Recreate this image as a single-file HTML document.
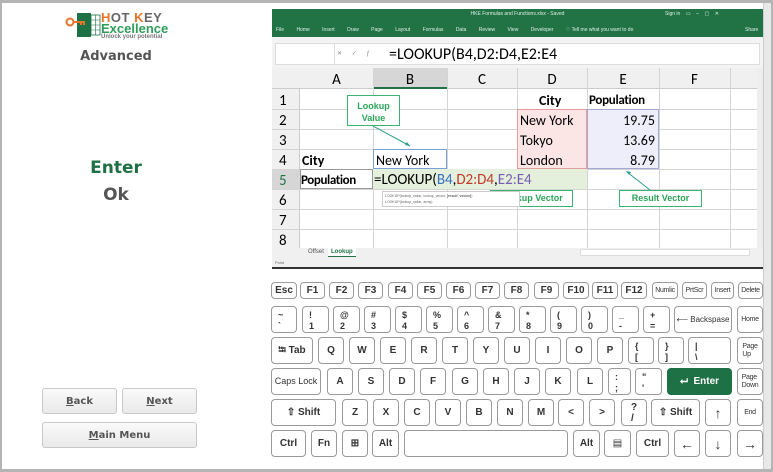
<!DOCTYPE html><html><head><meta charset="utf-8"><style>
*{margin:0;padding:0;box-sizing:border-box}
body{width:773px;height:472px;position:relative;overflow:hidden;background:#fff;font-family:"Liberation Sans",Arial,sans-serif}
.a{position:absolute}
.k{position:absolute;border:1px solid #9a9a9a;border-radius:4px;background:#fff;font:bold 10px "Liberation Sans",Arial,sans-serif;color:#333;display:flex;align-items:center;justify-content:center;line-height:1}
.k.s{font-size:7px;font-weight:normal;letter-spacing:-.3px}
.k.d{display:block;font-size:9px;padding:3px 0 0 6px;line-height:11px;text-align:left}
.k.ar{font-size:14px;font-weight:normal}
.r1{top:282px;height:17px}.r2{top:306px;height:27px}.r3{top:337px;height:27px}.r4{top:368px;height:27px}.r5{top:399px;height:27px}.r6{top:430px;height:27px}
.cell{position:absolute;font-family:Calibri,"Liberation Sans",sans-serif;font-size:14px;color:#000}
.hl{position:absolute;background:#d4d4d4;height:1px}
.vl{position:absolute;background:#d4d4d4;width:1px}
.btn{position:absolute;border:1px solid #c8c8c8;border-radius:3px;background:linear-gradient(#fafafa,#e9e9e9);font:bold 10px "DejaVu Sans",sans-serif;color:#555;display:flex;align-items:center;justify-content:center}
.call{position:absolute;border:1px solid #3cb371;background:#fff;color:#2aa55a;font:bold 9px "Liberation Sans",sans-serif;text-align:center}
</style></head><body>
<div class="a" style="left:0;top:0;width:773px;height:3px;background:#b4b4b4"></div>
<div class="a" style="left:0;bottom:0;width:773px;height:3px;background:#b4b4b4"></div>
<div class="a" style="left:0;top:0;width:2px;height:472px;background:#b4b4b4"></div>
<div class="a" style="left:763px;top:3px;width:10px;height:466px;background:#e8e8e8;border-left:1px solid #ccc;border-right:2px solid #b4b4b4"></div>
<svg class="a" style="left:64px;top:12px" width="38" height="26"><rect x="13" y="1" width="14" height="24" fill="#1e7145"/><rect x="27" y="3" width="9" height="20" fill="#fff" stroke="#1e7145" stroke-width=".8"/><path d="M27 8h9M27 13h9M27 18h9M31.5 3v20" stroke="#1e7145" stroke-width=".6"/><circle cx="6" cy="10" r="3.5" fill="none" stroke="#e8742a" stroke-width="2"/><path d="M9 10h12M17 10v3M20 10v3" stroke="#e8742a" stroke-width="2"/></svg>
<div class="a" style="left:101px;top:10px;font:bold 13px 'Liberation Sans',sans-serif;color:#666;letter-spacing:.5px"><span style="color:#e8742a">H</span>OT <span style="color:#e8742a">K</span>EY</div>
<div class="a" style="left:101px;top:21px;font:bold 13px 'Liberation Sans',sans-serif;color:#2e9c5a">Excellence</div>
<div class="a" style="left:101px;top:34px;font:bold 6px 'Liberation Sans',sans-serif;color:#777">Unlock your potential</div>
<div class="a" style="left:0;width:232px;top:49px;text-align:center;font:bold 13px 'DejaVu Sans',sans-serif;color:#555">Advanced</div>
<div class="a" style="left:0;width:232px;top:158px;text-align:center;font:bold 17px 'DejaVu Sans',sans-serif;color:#1e7145">Enter</div>
<div class="a" style="left:0;width:232px;top:185px;text-align:center;font:bold 17px 'DejaVu Sans',sans-serif;color:#555">Ok</div>
<div class="btn" style="left:42px;top:388px;width:75px;height:26px"><u>B</u>ack</div>
<div class="btn" style="left:122px;top:388px;width:75px;height:26px"><u>N</u>ext</div>
<div class="btn" style="left:42px;top:422px;width:155px;height:26px"><u>M</u>ain Menu</div>
<div class="a" style="left:272px;top:9px;width:491px;height:28px;background:#217346"></div>
<div class="a" style="left:272px;top:11px;width:491px;text-align:center;font:5px sans-serif;color:#e0efe6">HKE Formulas and Functions.xlsx - Saved</div>
<div class="a" style="left:665px;top:11px;font:5px sans-serif;color:#e0efe6">Sign in &nbsp;&nbsp; ▭ &nbsp;&nbsp; – &nbsp;&nbsp; ▢ &nbsp;&nbsp; ✕</div>
<div class="a" style="left:276px;top:27px;font:5px sans-serif;color:#e0efe6;word-spacing:11px;white-space:nowrap">File Home Insert Draw Page&#160;Layout Formulas Data Review View Developer <span style="word-spacing:0">♡ Tell me what you want to do</span></div>
<div class="a" style="left:745px;top:27px;font:5px sans-serif;color:#e0efe6">Share</div>
<div class="a" style="left:272px;top:37px;width:491px;height:31px;background:#f3f3f3"></div>
<div class="a" style="left:275px;top:43px;width:485px;height:22px;background:#fff;border:1px solid #ddd"></div>
<div class="a" style="left:334px;top:43px;width:1px;height:22px;background:#ddd"></div>
<div class="a" style="left:337px;top:50px;font:6px sans-serif;color:#888;word-spacing:8px">✕ ✓ ƒ</div>
<div class="a" style="left:389px;top:45px;font:16px Calibri,'Liberation Sans',sans-serif">=LOOKUP(B4,D2:D4,E2:E4</div>
<div class="a" style="left:272px;top:68px;width:485px;height:180px;background:#fff"></div>
<div class="a" style="left:272px;top:68px;width:485px;height:21px;background:#f0f0f0;border-bottom:1px solid #ccc"></div>
<div class="a" style="left:373px;top:68px;width:74px;height:21px;background:#d6d6d6;border-bottom:2px solid #217346"></div>
<div class="a" style="left:272px;top:89px;width:28px;height:159px;background:#f0f0f0;border-right:1px solid #ccc"></div>
<div class="a" style="left:272px;top:169px;width:28px;height:20px;background:#d6d6d6"></div>
<div class="a" style="left:757px;top:68px;width:6px;height:180px;background:#eee"></div>
<div class="hl" style="left:272px;top:109px;width:485px"></div><div class="hl" style="left:272px;top:129px;width:485px"></div><div class="hl" style="left:272px;top:149px;width:485px"></div><div class="hl" style="left:272px;top:169px;width:485px"></div><div class="hl" style="left:272px;top:189px;width:485px"></div><div class="hl" style="left:272px;top:209px;width:485px"></div><div class="hl" style="left:272px;top:229px;width:485px"></div>
<div class="vl" style="left:373px;top:68px;height:180px"></div><div class="vl" style="left:447px;top:68px;height:180px"></div><div class="vl" style="left:517px;top:68px;height:180px"></div><div class="vl" style="left:587px;top:68px;height:180px"></div><div class="vl" style="left:659px;top:68px;height:180px"></div><div class="vl" style="left:730px;top:68px;height:180px"></div>
<div class="cell" style="left:300px;top:71px;width:73px;text-align:center;font-size:15px">A</div>
<div class="cell" style="left:373px;top:71px;width:74px;text-align:center;font-size:15px">B</div>
<div class="cell" style="left:447px;top:71px;width:70px;text-align:center;font-size:15px">C</div>
<div class="cell" style="left:517px;top:71px;width:70px;text-align:center;font-size:15px">D</div>
<div class="cell" style="left:587px;top:71px;width:72px;text-align:center;font-size:15px">E</div>
<div class="cell" style="left:659px;top:71px;width:71px;text-align:center;font-size:15px">F</div>
<div class="cell" style="left:279px;top:91px;font-size:15px;line-height:20px">1<br>2<br>3<br>4<br><span style="color:#217346">5</span><br>6<br>7<br>8</div>
<div class="a" style="left:517px;top:109px;width:70px;height:60px;background:#fbe5e5;border:1px solid #e0a0a0"></div>
<div class="a" style="left:587px;top:109px;width:72px;height:60px;background:#eeeefa;border:1px solid #a8a8d8"></div>
<div class="a" style="left:373px;top:149px;width:74px;height:20px;border:1px solid #7aa0d8"></div>
<div class="a" style="left:373px;top:169px;width:214px;height:20px;background:#e4f0dc"></div>
<div class="a" style="left:300px;top:169px;width:73px;height:20px;border:1px solid #999"></div>
<div class="cell" style="left:539px;top:92px;font-weight:bold">City</div>
<div class="cell" style="left:589px;top:93px;font-weight:bold;font-size:13px;letter-spacing:-.3px">Population</div>
<div class="cell" style="left:520px;top:112px">New York</div>
<div class="cell" style="left:520px;top:132px">Tokyo</div>
<div class="cell" style="left:520px;top:152px">London</div>
<div class="cell" style="left:587px;top:112px;width:68px;text-align:right">19.75</div>
<div class="cell" style="left:587px;top:132px;width:68px;text-align:right">13.69</div>
<div class="cell" style="left:587px;top:152px;width:68px;text-align:right">8.79</div>
<div class="cell" style="left:302px;top:152px;font-weight:bold">City</div>
<div class="cell" style="left:376px;top:152px">New York</div>
<div class="cell" style="left:301px;top:173px;font-weight:bold;font-size:13px;letter-spacing:-.4px">Population</div>
<div class="cell" style="left:374px;top:171px;font-size:15px">=LOOKUP(<span style="color:#3b6fc4">B4</span>,<span style="color:#c0392b">D2:D4</span>,<span style="color:#7a5bb5">E2:E4</span></div>
<div class="call" style="left:347px;top:95px;width:53px;height:31px;padding-top:4px;line-height:12px">Lookup<br>Value</div>
<svg class="a" style="left:370px;top:126px" width="45" height="25"><path d="M3 0L40 20" stroke="#2a9d8f" stroke-width="1"/><path d="M40 20l-5-1 2-3z" fill="#2a9d8f"/></svg>
<div class="call" style="left:490px;top:190px;width:83px;height:17px;line-height:15px">Lookup Vector</div>
<div class="a" style="left:382px;top:191px;width:138px;height:16px;background:#fff;border:1px solid #ccc;font:3.5px sans-serif;color:#666;padding:1px 2px;line-height:6px">LOOKUP(lookup_value, lookup_vector, <b>[result_vector]</b>)<br>LOOKUP(lookup_value, array)</div>
<div class="call" style="left:619px;top:190px;width:83px;height:17px;line-height:15px">Result Vector</div>
<svg class="a" style="left:624px;top:170px" width="30" height="22"><path d="M3 2L26 20" stroke="#2a9d8f"/><path d="M2 1l5 1-2 3z" fill="#2a9d8f"/></svg>
<div class="a" style="left:272px;top:248px;width:491px;height:10px;background:#f0f0f0;font:6px sans-serif;color:#555"><span style="position:absolute;left:36px;top:1px">Offset</span><span style="position:absolute;left:56px;top:0;height:9px;padding:1px 3px;background:#fff;color:#217346;font-weight:bold;border-bottom:1px solid #217346">Lookup</span></div>
<div class="a" style="left:580px;top:249px;width:170px;height:7px;background:#fff;border:1px solid #ddd"></div>
<div class="a" style="left:272px;top:258px;width:491px;height:9px;background:#f0f0f0;font:4px sans-serif;color:#666;padding:2px 3px">Point</div>
<div class="a" style="left:272px;top:267px;width:491px;height:2px;background:#333"></div>
<div class="k r1" style="left:271px;width:26px">Esc</div>
<div class="k r1" style="left:300px;width:25px">F1</div><div class="k r1" style="left:329px;width:25px">F2</div><div class="k r1" style="left:358px;width:25px">F3</div><div class="k r1" style="left:388px;width:25px">F4</div><div class="k r1" style="left:417px;width:25px">F5</div><div class="k r1" style="left:446px;width:25px">F6</div><div class="k r1" style="left:475px;width:25px">F7</div><div class="k r1" style="left:504px;width:25px">F8</div><div class="k r1" style="left:534px;width:25px">F9</div><div class="k r1" style="left:563px;width:26px">F10</div><div class="k r1" style="left:592px;width:26px">F11</div><div class="k r1" style="left:621px;width:26px">F12</div>
<div class="k r1 s" style="left:652px;width:26px">Numlic</div><div class="k r1 s" style="left:682px;width:25px">PrtScr</div><div class="k r1 s" style="left:711px;width:23px">Insert</div><div class="k r1 s" style="left:738px;width:25px">Delete</div>
<div class="k r2 d" style="left:271px;width:26px">~<br>`</div>
<div class="k r2 d" style="left:302px;width:27px">!<br>1</div><div class="k r2 d" style="left:333px;width:27px">@<br>2</div><div class="k r2 d" style="left:364px;width:27px">#<br>3</div><div class="k r2 d" style="left:395px;width:27px">$<br>4</div><div class="k r2 d" style="left:426px;width:27px">%<br>5</div><div class="k r2 d" style="left:457px;width:27px">^<br>6</div><div class="k r2 d" style="left:488px;width:27px">&amp;<br>7</div><div class="k r2 d" style="left:519px;width:27px">*<br>8</div><div class="k r2 d" style="left:550px;width:27px">(<br>9</div><div class="k r2 d" style="left:581px;width:27px">)<br>0</div><div class="k r2 d" style="left:612px;width:27px">_<br>-</div><div class="k r2 d" style="left:643px;width:27px">+<br>=</div>
<div class="k r2" style="left:674px;width:58px;font-size:8px;font-weight:normal">⟵ Backspase</div>
<div class="k r2 s" style="left:737px;width:26px">Home</div>
<div class="k r3" style="left:271px;width:42px">⭾ Tab</div>
<div class="k r3" style="left:318px;width:26px">Q</div><div class="k r3" style="left:349px;width:26px">W</div><div class="k r3" style="left:380px;width:26px">E</div><div class="k r3" style="left:411px;width:26px">R</div><div class="k r3" style="left:442px;width:26px">T</div><div class="k r3" style="left:473px;width:26px">Y</div><div class="k r3" style="left:504px;width:26px">U</div><div class="k r3" style="left:535px;width:26px">I</div><div class="k r3" style="left:566px;width:26px">O</div><div class="k r3" style="left:597px;width:26px">P</div>
<div class="k r3 d" style="left:628px;width:26px">{<br>[</div><div class="k r3 d" style="left:658px;width:26px">}<br>]</div><div class="k r3 d" style="left:688px;width:43px">|<br>\</div>
<div class="k r3 s" style="left:737px;width:26px;line-height:8px">Page<br>Up</div>
<div class="k r4" style="left:271px;width:50px;font-weight:normal;font-size:9px">Caps Lock</div>
<div class="k r4" style="left:327px;width:26px">A</div><div class="k r4" style="left:358px;width:26px">S</div><div class="k r4" style="left:389px;width:26px">D</div><div class="k r4" style="left:420px;width:26px">F</div><div class="k r4" style="left:452px;width:26px">G</div><div class="k r4" style="left:483px;width:26px">H</div><div class="k r4" style="left:514px;width:26px">J</div><div class="k r4" style="left:545px;width:26px">K</div><div class="k r4" style="left:577px;width:26px">L</div>
<div class="k r4 d" style="left:608px;width:23px">:<br>;</div><div class="k r4 d" style="left:635px;width:27px">"<br>'</div>
<div class="k r4" style="left:667px;width:65px;background:#1e7145;border-color:#1e7145;color:#fff">⮠&nbsp; Enter</div>
<div class="k r4 s" style="left:737px;width:26px;line-height:8px">Page<br>Down</div>
<div class="k r5" style="left:271px;width:65px">⇧ Shift</div>
<div class="k r5" style="left:342px;width:26px">Z</div><div class="k r5" style="left:373px;width:26px">X</div><div class="k r5" style="left:404px;width:26px">C</div><div class="k r5" style="left:435px;width:26px">V</div><div class="k r5" style="left:466px;width:26px">B</div><div class="k r5" style="left:497px;width:26px">N</div><div class="k r5" style="left:528px;width:26px">M</div><div class="k r5" style="left:558px;width:26px">&lt;</div><div class="k r5" style="left:589px;width:26px">&gt;</div>
<div class="k r5" style="left:621px;width:26px;flex-direction:column;line-height:11px">?<br>/</div>
<div class="k r5" style="left:651px;width:49px">⇧ Shift</div>
<div class="k r5 ar" style="left:705px;width:26px">↑</div>
<div class="k r5 s" style="left:737px;width:26px">End</div>
<div class="k r6" style="left:271px;width:35px">Ctrl</div><div class="k r6" style="left:311px;width:26px">Fn</div><div class="k r6" style="left:342px;width:26px">⊞</div><div class="k r6" style="left:372px;width:27px">Alt</div>
<div class="k r6" style="left:404px;width:164px"></div>
<div class="k r6" style="left:573px;width:27px">Alt</div><div class="k r6" style="left:604px;width:27px;font-weight:normal">▤</div><div class="k r6" style="left:636px;width:33px">Ctrl</div>
<div class="k r6 ar" style="left:674px;width:26px">←</div><div class="k r6 ar" style="left:705px;width:26px">↓</div><div class="k r6 ar" style="left:737px;width:26px">→</div>
</body></html>
